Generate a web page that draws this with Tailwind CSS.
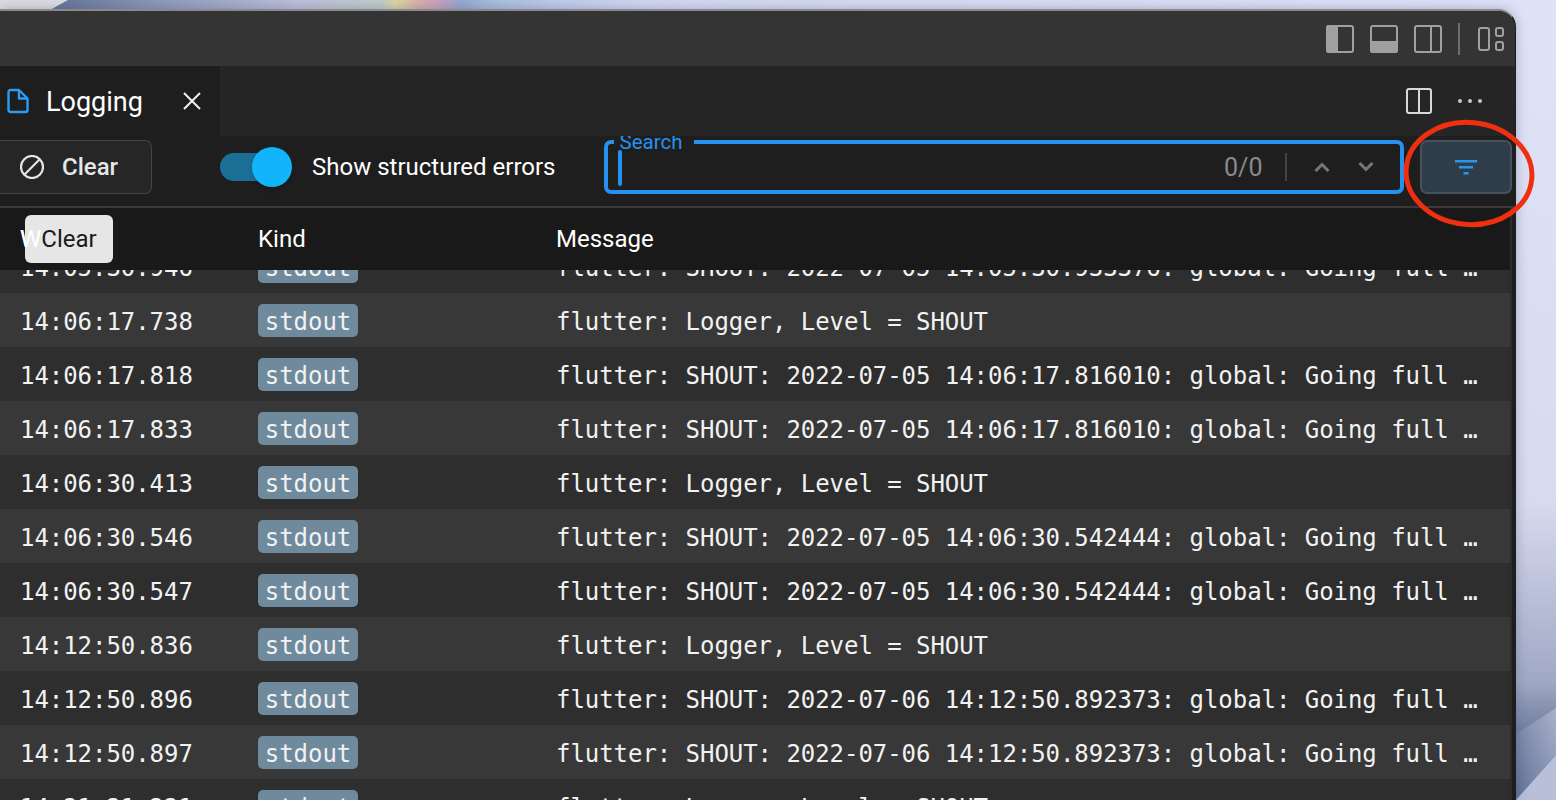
<!DOCTYPE html>
<html lang="en">
<head>
  <meta charset="UTF-8" />
  <title>Logging</title>
  <script src="https://cdn.jsdelivr.net/npm/@tailwindcss/browser@4"></script>
</head>
<body class="relative w-[1556px] h-[800px] overflow-hidden bg-[#dfe1f4] font-['Roboto',sans-serif]">

  <!-- wallpaper -->
  <svg class="absolute inset-0" width="1556" height="800" viewBox="0 0 1556 800">
    <defs>
      <linearGradient id="top" x1="0" x2="1" y1="0" y2="0">
        <stop offset="0" stop-color="#4d6288"/>
        <stop offset="0.1" stop-color="#8c98b8"/>
        <stop offset="0.19" stop-color="#bdbfda"/>
        <stop offset="0.245" stop-color="#c0ccc8"/>
        <stop offset="0.254" stop-color="#dcd8a0"/>
        <stop offset="0.27" stop-color="#d8b0a8"/>
        <stop offset="0.283" stop-color="#c8a0c0"/>
        <stop offset="0.296" stop-color="#98a8d0"/>
        <stop offset="0.315" stop-color="#a8bcdc"/>
        <stop offset="0.36" stop-color="#c0ccea"/>
        <stop offset="0.42" stop-color="#d4d8f2"/>
        <stop offset="1" stop-color="#e0e2f6"/>
      </linearGradient>
      <linearGradient id="side" x1="0" x2="0" y1="0" y2="1">
        <stop offset="0" stop-color="#e0e2f6"/>
        <stop offset="0.62" stop-color="#d8daee"/>
        <stop offset="0.75" stop-color="#b8bed8"/>
        <stop offset="0.85" stop-color="#a0a8c4"/>
        <stop offset="0.92" stop-color="#6c7a9a"/>
        <stop offset="1" stop-color="#6c7a9a"/>
      </linearGradient>
      <linearGradient id="mid" x1="1" x2="0" y1="0" y2="1">
        <stop offset="0" stop-color="#aab2cc"/>
        <stop offset="1" stop-color="#5f6f94"/>
      </linearGradient>
    </defs>
    <rect x="0" y="0" width="1556" height="14" fill="url(#top)"/>
    <path d="M0 0H68L50 10H0Z" fill="#dcdce2"/>
    <rect x="1500" y="14" width="56" height="786" fill="url(#side)"/>
    <path d="M1516 734L1556 708V755L1516 800Z" fill="url(#mid)"/>
    <path d="M1516 800L1556 755V800Z" fill="#b9bfd9"/>
  </svg>

  <!-- window -->
  <div class="relative mt-[9px] w-[1516px] h-[791px] rounded-tr-[18px] overflow-hidden border-t-2 border-r border-t-[#8a8a8a] border-r-[#1e1e1e] bg-[#1e1e1e] flex flex-col shadow-[0_0_12px_rgba(60,70,110,0.35)]">

    <!-- title bar -->
    <div class="h-[55px] shrink-0 bg-[#343434] flex items-center justify-end gap-[14px] pr-[11px]">
      <svg width="30" height="30" viewBox="0 0 30 30" fill="none" stroke="#a0a0a0" stroke-width="2"><rect x="2" y="2" width="26" height="26" rx="2"/><path d="M2 4a2 2 0 0 1 2-2h8v26H4a2 2 0 0 1-2-2z" fill="#a0a0a0"/></svg>
      <svg width="30" height="30" viewBox="0 0 30 30" fill="none" stroke="#a0a0a0" stroke-width="2"><rect x="2" y="2" width="26" height="26" rx="2"/><path d="M2 18h26v8a2 2 0 0 1-2 2H4a2 2 0 0 1-2-2z" fill="#a0a0a0"/></svg>
      <svg width="30" height="30" viewBox="0 0 30 30" fill="none" stroke="#a0a0a0" stroke-width="2"><rect x="2" y="2" width="26" height="26" rx="2"/><path d="M18 2v26"/></svg>
      <div class="ml-[1px] mr-[4px] w-[2px] h-[32px] bg-[#6e6e6e]"></div>
      <svg width="26" height="24" viewBox="0 0 26 24" fill="none" stroke="#a0a0a0" stroke-width="2"><rect x="1" y="1" width="10" height="22" rx="2"/><rect x="18" y="1" width="7" height="8" rx="2"/><rect x="18" y="15" width="7" height="8" rx="2"/></svg>
    </div>

    <!-- tab bar -->
    <div class="h-[70px] shrink-0 bg-[#252526] flex items-stretch justify-between">
      <div class="w-[220px] bg-[#1e1e1e] flex items-center pl-[7px] pb-[1px]">
        <svg width="22" height="26" viewBox="0 0 22 26" fill="none" stroke="#2a9df4" stroke-width="2.400" stroke-linejoin="round"><path d="M1.500 4a2 2 0 0 1 2-2h8.500l8.500 8.500V22a2 2 0 0 1-2 2h-15a2 2 0 0 1-2-2z"/><path d="M12 2v8.500h8.500"/></svg>
        <span class="ml-[17px] pt-[3px] text-[27px] leading-none text-white">Logging</span>
        <svg class="ml-[39px]" width="20" height="20" viewBox="0 0 20 20" fill="none" stroke="#f0f0f0" stroke-width="2"><path d="M2 2l16 16M18 2L2 18"/></svg>
      </div>
      <div class="flex items-center gap-[24px] pr-[32px] pb-[1px]">
        <svg width="28" height="28" viewBox="0 0 28 28" fill="none" stroke="#d8d8d8" stroke-width="2"><rect x="2" y="2" width="24" height="24" rx="2"/><path d="M14 2v24"/></svg>
        <svg width="26" height="6" viewBox="0 0 26 6" fill="#c8c8c8"><circle cx="3" cy="3" r="2"/><circle cx="13" cy="3" r="2"/><circle cx="23" cy="3" r="2"/></svg>
      </div>
    </div>

    <!-- toolbar -->
    <div class="h-[72px] shrink-0 flex items-center overflow-hidden border-b-2 border-[#3a3a3a] pb-[8px] bg-[#1e1e1e]">
      <button class="w-[152px] h-[54px] rounded-r-[7px] border border-l-0 border-[#444] bg-[#262626] flex items-center pl-[20px]">
        <svg width="24" height="24" viewBox="0 0 24 24" fill="none" stroke="#e6e6e6" stroke-width="2.200"><circle cx="12" cy="12" r="11"/><path d="M4.500 19.500L19.500 4.500"/></svg>
        <span class="ml-[18px] text-[24px] leading-none font-medium text-[#e6e6e6]">Clear</span>
      </button>
      <div class="relative ml-[68px] w-[72px] h-[40px] flex items-center">
        <div class="w-[68px] h-[28px] rounded-full bg-[#1b6f96]"></div>
        <div class="absolute right-0 top-0 w-[40px] h-[40px] rounded-full bg-[#12b5fb] shadow-md"></div>
      </div>
      <span class="ml-[20px] text-[24px] leading-none text-white">Show structured errors</span>

      <!-- search -->
      <div class="relative ml-[49px] w-[800px] h-[54px] rounded-[7px] border-[4px] border-[#2691ee] flex items-center justify-end">
        <span class="absolute left-[6px] -top-[14px] bg-[#1e1e1e] pl-[5px] pr-[12px] text-[20.5px] leading-[24px] text-[#2691ee]">Search</span>
        <div class="absolute left-[10px] top-[6px] w-[4px] h-[36px] rounded-full bg-[#2691ee]"></div>
        <span class="text-[25px] leading-none text-[#8a8a8a]">0/0</span>
        <div class="ml-[23px] w-[2px] h-[28px] bg-[#444]"></div>
        <svg class="ml-[27px]" width="16" height="10" viewBox="0 0 16 10" fill="none" stroke="#777" stroke-width="3"><path d="M1.500 9L8 2.500 14.500 9"/></svg>
        <svg class="ml-[28px] mr-[26px]" width="16" height="10" viewBox="0 0 16 10" fill="none" stroke="#777" stroke-width="3"><path d="M1.500 1L8 7.500 14.500 1"/></svg>
      </div>

      <button class="ml-[16px] w-[92px] h-[54px] rounded-[7px] border-2 border-[#46515c] bg-[#2f3c4a] flex items-center justify-center">
        <svg width="22" height="15" viewBox="0 0 22 15" fill="#2a95ee"><rect x="0" y="0" width="22" height="2.500"/><rect x="4" y="6" width="14" height="2.500"/><rect x="8.500" y="12" width="5" height="2.500"/></svg>
      </button>
    </div>

    <!-- table -->
    <div class="relative flex-1 min-h-0 w-[1512px] overflow-hidden border-r-2 border-[#2c2c2c]">
      <div class="absolute inset-x-0 top-0 z-10 h-[62px] bg-[#191919] flex items-center text-[24px] text-white">
        <span class="w-[258px] pl-[20px]">When</span>
        <span class="w-[298px]">Kind</span>
        <span>Message</span>
      </div>
      <!-- rows, scrolled up under the header -->
      <div class="pt-[31px] font-['DejaVu_Sans_Mono',monospace] text-[24px] tracking-[-0.05px] text-[#f2f2f2]">
        <div class="h-[54px] bg-[#2e2e2e] flex items-center"><span class="w-[258px] pl-[20px] pt-[4px]">14:05:30.946</span><span class="w-[298px] flex"><span class="w-[100px] h-[33px] leading-[37px] text-center rounded-[5px] bg-[#6e8a9c]">stdout</span></span><span class="pt-[4px]">flutter: SHOUT: 2022-07-05 14:05:30.933376: global: Going full …</span></div>
        <div class="h-[54px] bg-[#383838] flex items-center"><span class="w-[258px] pl-[20px] pt-[4px]">14:06:17.738</span><span class="w-[298px] flex"><span class="w-[100px] h-[33px] leading-[37px] text-center rounded-[5px] bg-[#6e8a9c]">stdout</span></span><span class="pt-[4px]">flutter: Logger, Level = SHOUT</span></div>
        <div class="h-[54px] bg-[#2e2e2e] flex items-center"><span class="w-[258px] pl-[20px] pt-[4px]">14:06:17.818</span><span class="w-[298px] flex"><span class="w-[100px] h-[33px] leading-[37px] text-center rounded-[5px] bg-[#6e8a9c]">stdout</span></span><span class="pt-[4px]">flutter: SHOUT: 2022-07-05 14:06:17.816010: global: Going full …</span></div>
        <div class="h-[54px] bg-[#383838] flex items-center"><span class="w-[258px] pl-[20px] pt-[4px]">14:06:17.833</span><span class="w-[298px] flex"><span class="w-[100px] h-[33px] leading-[37px] text-center rounded-[5px] bg-[#6e8a9c]">stdout</span></span><span class="pt-[4px]">flutter: SHOUT: 2022-07-05 14:06:17.816010: global: Going full …</span></div>
        <div class="h-[54px] bg-[#2e2e2e] flex items-center"><span class="w-[258px] pl-[20px] pt-[4px]">14:06:30.413</span><span class="w-[298px] flex"><span class="w-[100px] h-[33px] leading-[37px] text-center rounded-[5px] bg-[#6e8a9c]">stdout</span></span><span class="pt-[4px]">flutter: Logger, Level = SHOUT</span></div>
        <div class="h-[54px] bg-[#383838] flex items-center"><span class="w-[258px] pl-[20px] pt-[4px]">14:06:30.546</span><span class="w-[298px] flex"><span class="w-[100px] h-[33px] leading-[37px] text-center rounded-[5px] bg-[#6e8a9c]">stdout</span></span><span class="pt-[4px]">flutter: SHOUT: 2022-07-05 14:06:30.542444: global: Going full …</span></div>
        <div class="h-[54px] bg-[#2e2e2e] flex items-center"><span class="w-[258px] pl-[20px] pt-[4px]">14:06:30.547</span><span class="w-[298px] flex"><span class="w-[100px] h-[33px] leading-[37px] text-center rounded-[5px] bg-[#6e8a9c]">stdout</span></span><span class="pt-[4px]">flutter: SHOUT: 2022-07-05 14:06:30.542444: global: Going full …</span></div>
        <div class="h-[54px] bg-[#383838] flex items-center"><span class="w-[258px] pl-[20px] pt-[4px]">14:12:50.836</span><span class="w-[298px] flex"><span class="w-[100px] h-[33px] leading-[37px] text-center rounded-[5px] bg-[#6e8a9c]">stdout</span></span><span class="pt-[4px]">flutter: Logger, Level = SHOUT</span></div>
        <div class="h-[54px] bg-[#2e2e2e] flex items-center"><span class="w-[258px] pl-[20px] pt-[4px]">14:12:50.896</span><span class="w-[298px] flex"><span class="w-[100px] h-[33px] leading-[37px] text-center rounded-[5px] bg-[#6e8a9c]">stdout</span></span><span class="pt-[4px]">flutter: SHOUT: 2022-07-06 14:12:50.892373: global: Going full …</span></div>
        <div class="h-[54px] bg-[#383838] flex items-center"><span class="w-[258px] pl-[20px] pt-[4px]">14:12:50.897</span><span class="w-[298px] flex"><span class="w-[100px] h-[33px] leading-[37px] text-center rounded-[5px] bg-[#6e8a9c]">stdout</span></span><span class="pt-[4px]">flutter: SHOUT: 2022-07-06 14:12:50.892373: global: Going full …</span></div>
        <div class="h-[54px] bg-[#2e2e2e] flex items-center"><span class="w-[258px] pl-[20px] pt-[4px]">14:21:21.221</span><span class="w-[298px] flex"><span class="w-[100px] h-[33px] leading-[37px] text-center rounded-[5px] bg-[#6e8a9c]">stdout</span></span><span class="pt-[4px]">flutter: Logger, Level = SHOUT</span></div>
      </div>
    </div>
  </div>

  <!-- tooltip, the W of the column title shows through it -->
  <div class="absolute z-20 left-[25px] top-[215px] w-[88px] h-[48px] rounded-[6px] bg-[#e6e6e6] flex items-center justify-center text-[24px] text-[#1a1a1a]">
    <span class="absolute left-[-5px] text-white">W</span>
    <span>Clear</span>
  </div>

  <!-- red annotation -->
  <svg class="absolute z-20 inset-0 pointer-events-none" width="1556" height="800" viewBox="0 0 1556 800" fill="none">
    <ellipse cx="1469" cy="173.500" rx="63" ry="51" stroke="#ee2f10" stroke-width="5" transform="rotate(5 1469 173.500)"/>
  </svg>
</body>
</html>
